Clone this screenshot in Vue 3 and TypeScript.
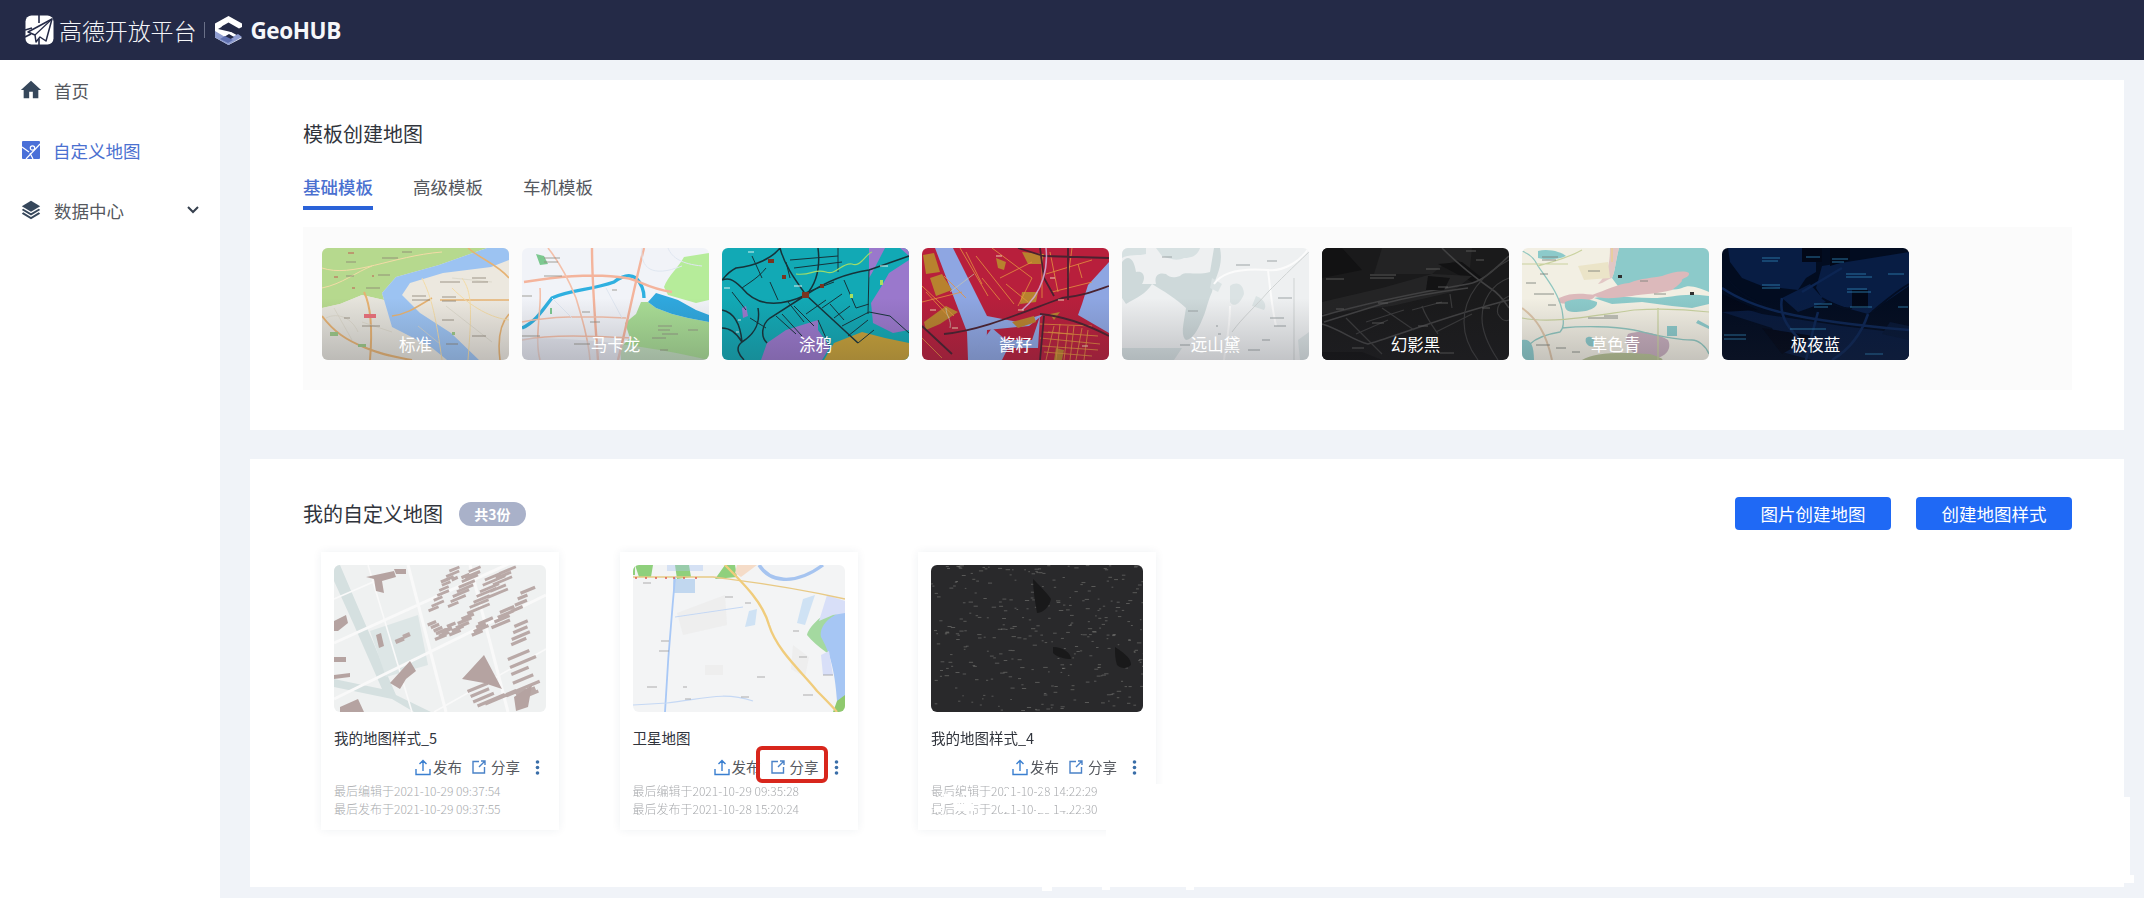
<script setup lang="ts">
type Shape = { d: string; f?: string; s?: string; w?: number; o?: number }
const F = (f: string, d: string, o?: number): Shape => ({ d, f, o })
const S = (s: string, w: number, d: string, o?: number): Shape => ({ d, s, w, o })
// tiny place-name dashes: each entry is x, y, length
const dashes = (c: string, list: number[][], w = 1.4, o = 1): Shape =>
  S(c, w, list.map(([x, y, l]) => `M${x} ${y}h${l}`).join(''), o)

function rng(seed: number) {
  let v = seed
  return () => {
    v = (v * 16807) % 2147483647
    return v / 2147483647
  }
}

function strips(seed: number, cols: number[][], color: string): Shape {
  // rows of slanted building blocks
  const r = rng(seed)
  let d = ''
  for (const [x0, y0, n, dx, dy, len, thick] of cols) {
    for (let i = 0; i < n; i++) {
      const x = x0 + dx * i + r() * 1.5
      const y = y0 + dy * i + r() * 1.5
      const l = len * (0.65 + r() * 0.45)
      d += `M${x} ${y}l${l} ${-l * 0.42}l${thick * 0.42} ${thick}l${-l} ${l * 0.42}z`
    }
  }
  return F(color, d)
}

const thumbs: { name: string; bg: string; shapes: Shape[] }[] = [
  {
    name: '标准', bg: '#ece8df',
    shapes: [
      F('#b6d98e', 'M0 0H165L117 17 74 29 60 45 62 52 40 47 18 56 0 60Z'),
      F('#e6e4dc', 'M0 60 18 56 40 47 62 52 70 79 109 99 125 112H0Z'),
      F('#9cc3f2', 'M187 0H165L117 17 74 29 60 45 70 79 109 99 125 112H157L129 85 98 65 80 47 88 35 121 25 169 19 187 12Z'),
      S('#e6b272', 2, 'M0 68C12 84 24 92 44 100S70 108 90 112M42 44C50 60 50 88 48 112'),
      S('#e6b272', 1.6, 'M146 0C160 12 175 16 187 30M187 66C176 78 176 96 178 112M118 52H187M70 68C86 66 96 58 110 50'),
      S('#f3dba6', 1, 'M0 20C30 30 70 8 120 4M100 30C110 50 114 70 120 112M130 40C150 60 170 70 187 72M140 30C150 44 150 60 146 112M0 40C20 36 34 24 50 18'),
      S('#d9d5c8', .8, 'M4 70C16 64 30 70 36 84M12 60 30 92M70 84 40 74M124 58 170 94M130 30 170 34M96 78 118 96'),
      F('#e8707a', 'M42 66h12v4h-12z'),
      F('#9bc887', 'M8 84h8v4h-8zM36 96h8v3h-8zM130 84h3v3h-3z'),
      dashes('#8a7f70', [[90, 52, 18], [120, 53, 14], [118, 34, 20], [150, 34, 16], [40, 78, 18], [120, 72, 12], [150, 88, 14], [124, 96, 12], [24, 14, 10], [60, 10, 16], [56, 27, 12], [44, 40, 14], [90, 48, 14], [120, 49, 14], [150, 30, 14], [22, 70, 6], [80, 4, 10], [24, 28, 8]], 1, .8),
      dashes('#c05a50', [[26, 5, 6], [12, 29, 4], [50, 28, 2], [30, 40, 3]], 1),
    ],
  },
  {
    name: '马卡龙', bg: '#f1f3f8',
    shapes: [
      F('#b6ec9a', 'M187 5 162 9C156 20 146 28 142 39L146 47 174 55 187 52Z'),
      F('#a8dc94', 'M187 74 166 70 150 66 134 60 126 54 119 54 114 66 103 75 108 90 98 100 99 112H187Z'),
      F('#2fa8de', 'M126 54 134 45 150 50 156 52 174 62 187 67V74L166 70 150 66 134 60Z'),
      S('#2fb0e0', 3.4, 'M0 80C14 74 22 60 30 50 46 42 70 42 92 34 100 28 108 26 114 30 120 36 122 44 122 50'),
      S('#f4b49c', 2.4, 'M70 0C70 20 72 60 76 112M2 34C28 30 70 24 104 30 118 32 124 40 150 44M96 112C104 80 112 40 122 0'),
      S('#f4c0aa', 1.6, 'M26 0C42 20 50 40 54 50 60 70 66 90 68 112M0 74C30 68 60 68 104 70M0 92C30 86 70 88 110 90M18 40C20 60 12 90 18 112'),
      S('#dfe6f0', 1, 'M120 0C118 20 130 30 160 18M146 0C150 10 160 16 180 18M30 50 50 70M84 40 100 70'),
      F('#7cc890', 'M14 6l8 2 4 8-8 1zM28 60h2v6h-2z'),
      F('#d9dce6', 'M0 90C40 90 100 92 187 112H0Z', .5),
      dashes('#8e8a80', [[22, 10, 16], [22, 14, 14], [22, 28, 18], [60, 64, 8], [68, 74, 10], [136, 78, 14], [136, 82, 12], [130, 90, 14], [52, 96, 16], [0, 48, 10], [0, 88, 18], [90, 42, 5], [140, 86, 16], [166, 82, 10], [138, 102, 8]], 1, .8),
    ],
  },
  {
    name: '涂鸦', bg: '#12a9b5',
    shapes: [
      F('#9a78cc', 'M187 12 167 25 159 39 149 55 151 75 171 85 187 82Z'),
      F('#9a78cc', 'M147 0H163L150 25 147 30ZM178 0H187V8Z'),
      F('#9a78cc', 'M39 112 45 95 64 82 96 72 96 82 108 99 100 112ZM20 60l4-2 2 10-5 2z'),
      F('#c8a238', 'M102 112 112 95 140 84 163 90 187 95V112Z'),
      S('#16333a', 1.5, 'M58 0C50 10 34 18 14 20 6 24 2 30 0 32M58 0C62 16 72 30 84 47L136 95M96 0C98 16 96 34 84 47M84 47C100 36 120 26 147 22L187 8M84 47C60 58 36 60 20 40 10 30 6 30 0 32M36 60C38 72 36 84 20 94 12 100 18 108 22 112M0 62C10 64 18 72 20 94M0 80C8 80 14 84 20 94M84 47 48 70C40 76 38 88 45 95'),
      S('#16333a', 1, 'M20 40C28 34 36 30 44 20M64 14 68 30M68 12 116 8M116 0V24M48 34 56 52M72 58 92 78M60 66 80 88M80 46 112 34M100 60 120 46M112 70 128 58M120 78 147 64 168 68 187 85M122 32 134 60M147 22 146 66M96 72 108 99M152 82 136 95M54 68 74 86M66 54 82 74M84 66 104 52M72 20 120 14M30 8 40 30M10 44 24 62M28 70 44 80M108 56 122 72M134 60 147 56M126 88 146 72'),
      S('#9fdc6a', 1.2, 'M74 26C90 28 92 20 104 24 114 28 120 14 130 16 138 20 144 6 150 4'),
      F('#7a3420', 'M46 11h6v4h-6zM80 44h7v6h-7zM60 27h4v4h-4zM98 36h4v4h-4z'),
      dashes('#d8f2f0', [[26, 4, 6], [158, 18, 8], [72, 38, 8], [2, 40, 6], [16, 72, 3], [14, 84, 3]], 1.2),
      F('#a8e060', 'M158 32h3v5h-3zM128 46h3v4h-3z'),
    ],
  },
  {
    name: '酱籽', bg: '#b81f3c',
    shapes: [
      F('#8ea6e2', 'M13 0H31L65 68 96 74 122 66 107 78 65 82 64 112H46L45 84Z'),
      F('#8ea6e2', 'M187 14V85L156 67 160 56 166 37Z'),
      F('#8ea6e2', 'M46 112H80L86 100 116 100 118 68 110 92 84 92 70 80Z'),
      F('#b8822e', 'M1 7 12 5 18 24 4 26ZM8 30 20 26 30 42 14 48ZM2 74 24 58 36 64 18 76 4 82ZM74 10 84 14 82 22 76 20ZM100 4 122 6 120 16 106 16ZM100 44 116 44 114 54 98 56ZM90 74 112 68 114 74 96 80ZM128 66 138 64 132 72ZM134 100 142 102 140 112 132 112Z'),
      S('#e5943f', .8, 'M38 0 66 48M54 8 92 56M70 0 110 30M110 30 96 58M0 38 32 68M0 54 40 44M78 30 110 14M120 6 120 50M124 26 170 12M130 44 170 34M150 0 146 30M0 90 20 110M118 76 170 78M132 78 124 112M146 78 142 112M160 80 154 112M118 90 178 96M122 104 170 108M126 84 150 86M138 76 134 112M152 78 148 112M166 82 162 112M120 84 176 88M120 98 176 102M44 4 60 36M60 30 78 52M84 36 106 54M128 4 136 44M156 16 160 30M22 28 44 50M4 44 28 70'),
      S('#4a2230', 1.8, 'M0 78 30 106M22 86C60 82 96 66 140 50 160 48 170 44 187 38M146 0V52M118 0 122 30 132 48M118 66C140 68 160 74 187 88M122 68 118 112M96 0 122 8 187 10'),
      S('#d0a8d0', 1.5, 'M124 0C126 18 122 44 100 62', .9),
      S('#c8c8b0', 1, 'M52 26 28 44M24 60C24 68 30 72 28 80', .7),
      dashes('#f0d0b0', [[74, 8, 6], [128, 30, 5], [136, 52, 6], [96, 62, 6], [160, 98, 6], [8, 62, 6], [30, 80, 6]], 1.2),
    ],
  },
  {
    name: '远山黛', bg: '#eef0f1',
    shapes: [
      F('#ced9da', 'M0 14C6 6 12 10 14 24 22 22 24 30 20 36H34C32 28 36 24 44 26 48 30 52 30 58 28 62 22 74 28 88 24L92 0H98C102 20 92 30 90 44 86 52 84 64 80 72 76 82 70 92 64 92 58 88 62 74 64 60 56 52 40 42 30 36 24 46 14 50 4 56L0 50Z'),
      F('#d7e1e2', 'M0 0H24V6C18 8 6 6 0 10ZM34 0H78C76 6 72 10 62 10 54 14 46 10 40 8ZM0 100H60L52 112H0Z'),
      F('#dbe3e4', 'M108 38C116 32 122 38 122 46 118 56 112 60 108 54ZM90 30 100 36 96 44 88 40ZM134 48C140 50 146 56 142 62L130 58ZM176 92 187 84V112H178Z'),
      S('#fbfbfb', 2, 'M92 36C100 24 120 20 146 22 160 24 178 14 187 0M108 58C108 80 104 96 102 112M146 22C148 40 150 60 154 78'),
      S('#cfd3d3', 1, 'M110 84C120 70 134 58 146 44 158 32 170 20 187 4M172 30V112'),
      dashes('#9da4a6', [[40, 9, 10], [114, 17, 14], [145, 13, 10], [66, 63, 10], [156, 50, 14], [148, 70, 14], [152, 78, 12], [58, 97, 10], [126, 102, 12], [140, 92, 8], [94, 78, 2], [96, 86, 3]], 1),
    ],
  },
  {
    name: '幻影黑', bg: '#1a1a1b',
    shapes: [
      F('#232324', 'M52 26 60 0H150L148 20 136 12 120 18 110 26Z'),
      F('#121213', 'M116 16 140 14 160 30 150 34ZM0 0H20L40 22 0 30Z'),
      F('#262627', 'M0 54 60 40 110 26 150 28 130 44 70 58 0 66Z', .9),
      S('#414142', 1.6, 'M0 68C40 56 100 44 146 36 160 34 172 22 187 8M2 74 60 56C90 48 130 42 146 40M120 0C130 10 148 26 168 40 178 46 183 54 187 60M0 76C20 82 30 92 46 96 80 86 130 66 187 52'),
      S('#3a3a3b', 1.2, 'M187 12C160 26 142 48 142 74 142 90 150 104 156 112M187 30C170 36 160 52 160 70 160 84 168 100 176 112M187 48C178 52 174 60 176 66 178 70 182 74 187 72M100 58C104 70 112 80 116 86M24 70 60 106M60 60 92 82M44 74 82 62M34 86 66 72M90 62 120 54M114 84 150 66M128 46 130 60'),
      F('#131314', 'M106 28 128 30 122 42 104 42ZM0 112V104H40L60 112Z'),
      dashes('#5e5e5e', [[48, 27, 26], [48, 30, 24], [4, 31, 18], [104, 21, 14], [144, 3, 10], [154, 12, 8], [50, 75, 12], [114, 55, 12], [14, 61, 8], [56, 55, 10], [96, 78, 10], [160, 60, 8], [30, 100, 12], [118, 105, 14], [116, 39, 10]], 1, .9),
    ],
  },
  {
    name: '草色青', bg: '#f2efe3',
    shapes: [
      F('#8ccaca', 'M97 0H187V44C176 40 168 36 160 40 150 44 130 38 112 44 100 46 96 38 90 30 93 24 93 16 97 0Z'),
      F('#8ccaca', 'M72 50C90 46 110 50 130 50 150 50 160 44 187 48V56L170 60 150 58 120 54 90 56Z'),
      F('#dcb9bb', 'M70 47C84 42 96 36 107 35 120 30 130 30 140 28 150 24 162 22 167 25 168 30 158 30 160 33 156 38 152 40 150 42 136 46 120 46 110 48 94 50 80 52 70 47ZM37 50C50 44 62 46 73 47 74 52 60 54 50 56 42 56 34 56 37 50Z'),
      F('#dcb9bb', 'M88 0H97C93 16 93 24 90 30 84 32 80 36 76 36 86 26 88 14 88 0Z', .75),
      F('#8ccaca', 'M43 54C52 50 66 50 75 54 76 60 66 64 52 64 44 64 42 60 43 54ZM0 92C8 90 12 96 12 112H0ZM64 90C70 86 74 92 72 98 68 100 62 96 64 90ZM145 78h10v10h-10zM176 72l11 6v3l-13-6z'),
      F('#c7aebc', 'M106 86C118 82 132 84 146 92 150 100 146 112 120 112 110 102 100 98 106 86Z'),
      F('#b7c294', 'M60 112C72 104 100 104 128 106 146 112 140 112 138 112Z'),
      F('#ebe4c8', 'M56 18 86 14 88 30 62 32Z'),
      S('#8fc6bf', 1.3, 'M0 3C8 6 12 10 16 18 24 30 36 44 40 62 42 74 42 80 38 84 26 86 14 90 8 96M40 80C60 78 90 78 112 82 130 86 150 92 170 92 176 92 184 98 187 106'),
      S('#c9d29f', 1.2, 'M0 70C30 76 70 68 112 62 140 60 170 62 187 64M16 18C30 14 46 10 60 2M136 60V112M0 16H46'),
      S('#dcc4a8', 2, 'M0 60C14 70 24 84 30 112'),
      S('#e8cf96', 1.6, 'M90 0V14'),
      F('#8ccaca', 'M16 3C26 0 40 4 44 8 36 12 24 12 16 10Z'),
      dashes('#7b7f78', [[20, 9, 16], [20, 12, 14], [66, 23, 12], [18, 26, 8], [4, 35, 10], [12, 46, 20], [26, 57, 8], [66, 70, 30], [82, 68, 14], [14, 97, 14], [34, 100, 10], [118, 33, 8], [132, 46, 12], [50, 104, 8]], 1, .85),
      F('#303030', 'M96 27h4v3h-4zM168 44h4v3h-4z'),
    ],
  },
  {
    name: '极夜蓝', bg: '#020c20',
    shapes: [
      F('#081d44', 'M6 0H80V12H94V24L84 30 76 42 40 38 20 30 8 14ZM100 18 187 4V38L146 66 124 60 100 50 94 40ZM88 36 104 54 76 64 60 50Z'),
      F('#07193c', 'M0 54 40 66 120 78 187 86V112H90L60 104 50 80 0 64Z'),
      F('#020818', 'M80 0H100V14H80ZM108 0H128V12L108 18ZM130 42H146V60H130ZM0 46 36 62 0 64ZM40 80 92 88 60 106Z'),
      F('#061634', 'M168 74 187 78V92L160 86Z'),
      S('#0c2552', 2.6, 'M0 40C30 60 70 72 187 82M60 50C56 70 70 84 82 96M80 44 120 20M96 64C92 78 88 94 84 112M146 66C140 84 130 100 110 112'),
      S('#030d22', 2, 'M0 20C6 36 24 50 40 56M100 50C110 56 120 62 130 60M187 36C170 46 160 56 150 64'),
      dashes('#2a7aaa', [[40, 10, 18], [40, 13, 16], [84, 9, 14], [110, 11, 16], [110, 14, 12], [124, 26, 20], [124, 29, 26], [166, 26, 16], [40, 37, 18], [40, 40, 18], [125, 41, 20], [125, 44, 24], [92, 56, 18], [92, 59, 14], [128, 59, 22], [68, 81, 36], [2, 87, 22], [2, 91, 22], [143, 106, 18], [176, 59, 10]], 1, .9),
    ],
  },
]

const dots = (() => {
  const r = rng(77)
  let d = ''
  for (let i = 0; i < 320; i++) {
    d += `M${(r() * 212).toFixed(1)} ${(r() * 147).toFixed(1)}h${(1.5 + r() * 3).toFixed(1)}`
  }
  return d
})()

const cards: { title: string; bg: string; shapes: Shape[]; edited: string; published: string }[] = [
  {
    title: '我的地图样式_5', bg: '#eff1f1',
    edited: '最后编辑于2021-10-29 09:37:54', published: '最后发布于2021-10-29 09:37:55',
    shapes: [
      F('#d5e0e0', 'M0 0H6L30 56 62 130 97 147H80L58 134 0 122V114L48 124 20 60 0 16Z'),
      F('#dde6e6', 'M36 66 84 50 94 100 52 112Z'),
      S('#f9f9f9', 3, 'M0 78 212 -18M0 134 212 30M74 0 112 147M136 0 174 147'),
      S('#f9f9f9', 1.6, 'M34 0 78 147M0 34 60 8M100 147 212 84'),
      strips(3, [[94, 44, 9, 2.5, -5, 13, 2.6], [112, 40, 8, 3, -5, 15, 2.6], [132, 46, 7, 3, -5.500, 22, 2.6], [152, 30, 5, 3, -6, 22, 2.6], [106, 14, 4, 10, -2, 9, 3], [176, 44, 4, 3, -6, 14, 3], [100, 72, 5, 3, -3, 12, 3], [172, 92, 6, 2, 8, 24, 3], [170, 128, 3, 10, -2, 12, 4], [142, 138, 2, 8, -2, 26, 3], [60, 74, 2, 8, -5, 10, 4], [92, 58, 4, 3, 3, 10, 3], [114, 68, 5, 3, -4, 14, 3], [136, 68, 4, 2.500, -4, 14, 3], [156, 60, 4, 3, -5, 20, 3], [176, 78, 4, 1, -6, 20, 3], [132, 124, 3, 3, 5, 22, 3]], '#b9a9a7'),
      F('#b5a3a1', 'M128 114 150 90 168 124 150 118 ZM56 118 76 96 82 106 72 114 66 124ZM42 70l5-2 3 13-5 2zM32 12 60 6 62 12 48 16 50 28 42 26 40 14zM60 4h12v5h-10zM0 56 12 50 14 58 4 66 0 66ZM0 110 16 108 16 112 0 114ZM6 142 24 134 30 147H6ZM180 132 198 120 194 142 182 146ZM0 92H12V97H0Z'),
    ],
  },
  {
    title: '卫星地图', bg: '#f3f4f5',
    edited: '最后编辑于2021-10-29 09:35:28', published: '最后发布于2021-10-28 15:20:24',
    shapes: [
      F('#8fd07c', 'M2 0H20L18 12 6 12ZM42 0H56L58 12 44 14ZM82 14 92 0H102L104 12 ZM0 0H2V10H0Z'),
      F('#f5dcc8', 'M104 0H124L108 12 102 8Z'),
      F('#a8c6f2', 'M34 0H70V6H34Z', .4),
      F('#b4d0ee', 'M40 14H62V28H40Z', .8),
      F('#a4d9a0', 'M212 36C196 44 176 60 174 70 184 82 200 92 212 100Z'),
      F('#a6c6f4', 'M212 46C198 50 186 60 188 72 196 86 202 104 204 136L212 144Z'),
      F('#d8dff8', 'M194 30 212 36V48L200 50 186 56ZM188 90 196 86 200 110 190 110Z'),
      F('#cfe2f4', 'M170 34 182 30 172 60 164 58ZM116 46 124 44 122 60 112 62Z'),
      F('#8fc96e', 'M204 136 212 130V147H200Z'),
      F('#ececec', 'M44 48 92 30 94 60 50 70ZM72 100h18v10h-18zM160 80l16 12-4 20-14-8z', .8),
      S('#a6c4f0', 3.4, 'M126 0C136 16 160 22 190 0'),
      S('#e8c984', 1.3, 'M0 12H80C110 16 150 20 212 34'),
      S('#f0cc7c', 2.4, 'M92 0C112 20 130 38 136 60 144 86 170 108 184 126 194 136 200 142 204 147'),
      S('#a8c8f6', 1.8, 'M42 12C40 40 36 70 32 147'),
      S('#c5d8f4', 1.1, 'M42 52 110 42M0 140 34 138M34 138C70 134 90 126 120 136'),
      dashes('#e05a50', [[2, 13, 2], [12, 13, 2], [22, 13, 2], [32, 13, 2], [40, 13, 2], [50, 13, 2], [62, 13, 2]], 1.4),
      dashes('#9b9b9b', [[10, 18, 8], [28, 76, 8], [26, 86, 10], [92, 32, 8], [112, 38, 6], [124, 112, 8], [108, 132, 8], [166, 92, 8], [190, 110, 10], [14, 122, 10], [50, 122, 4], [52, 134, 6], [170, 130, 10], [160, 66, 6]], 1, .8),
    ],
  },
  {
    title: '我的地图样式_4', bg: '#29292b',
    edited: '最后编辑于2021-10-28 14:22:29', published: '最后发布于2021-10-28 14:22:30',
    shapes: [
      S('#8a8a86', 1, dots, .5),
      F('#19191a', 'M102 14C106 18 118 30 120 34 118 44 110 48 106 48 104 36 102 24 102 14ZM122 82C132 82 140 88 140 94 134 94 126 92 122 88ZM184 82C196 90 200 94 200 100 196 104 190 104 186 100 184 94 184 88 184 82Z'),
    ],
  },
]

// patches where the reference's text and edges were wiped out
const wipes = [
  { left: 928, top: 795, width: 5, height: 7 }, { left: 944, top: 794, width: 7, height: 4 },
  { left: 962, top: 791, width: 8, height: 4 }, { left: 1006, top: 789, width: 4, height: 7 },
  { left: 1042, top: 789, width: 3, height: 6 }, { left: 1106, top: 784, width: 60, height: 60 },
  { left: 920, top: 815, width: 240, height: 3 }, { left: 934, top: 806, width: 7, height: 6 },
  { left: 954, top: 804, width: 20, height: 7 }, { left: 1000, top: 804, width: 10, height: 8 },
  { left: 1036, top: 804, width: 14, height: 9 }, { left: 1060, top: 804, width: 12, height: 7 },
  { left: 920, top: 826, width: 235, height: 3 }, { left: 2124, top: 797, width: 6, height: 86 },
  { left: 1042, top: 887, width: 10, height: 4 }, { left: 1102, top: 887, width: 8, height: 3 },
  { left: 1186, top: 887, width: 8, height: 3 }, { left: 2096, top: 875, width: 38, height: 8 },
]
const wipeStyle = (w: { left: number; top: number; width: number; height: number }) => ({
  left: `${w.left}px`, top: `${w.top}px`, width: `${w.width}px`, height: `${w.height}px`,
})
</script>

<template>
  <div class="page">
    <header class="topbar">
      <svg class="amap" width="29" height="30" viewBox="0 0 29 30">
        <rect x="0.5" y="0.5" width="28" height="29" rx="6" fill="#fff" />
        <path d="M14 0v8M14 24v6M0 15l7-2M0 22l6-3" stroke="#242a47" stroke-width="1.600" fill="none" />
        <path d="M27 4 3 17l7 3 1 7 4-5 6 4z" fill="#fff" stroke="#242a47" stroke-width="1.500" stroke-linejoin="round" />
        <path d="M27 4 10 20" stroke="#242a47" stroke-width="1.100" />
      </svg>
      <span class="brand">高德开放平台</span>
      <i class="brand-sep"></i>
      <svg class="geo" width="29" height="31" viewBox="0 0 29 31">
        <path d="M14.500 1 28 8.500V12l-3 1.500-10.500-6-7 4 7 4 13.500 7.500L14.500 30 1 22.500V8.500Z" fill="#fff" />
        <path d="M1 16 14.500 24 24 19l4 3-13.500 8L1 22.500Z" fill="#8f9dd0" />
        <path d="M10 22l5-3 5 3-5 3zM4 14l7-4 9 5-3 2z" fill="#242a47" />
        <path d="M6 24l8 4 5-3-8-4z" fill="#5f70b0" />
      </svg>
      <span class="geohub">GeoHUB</span>
    </header>

    <div class="body">
      <aside class="sidebar">
        <a class="menu-item">
          <svg width="22" height="22" viewBox="0 0 24 24"><path d="M10 21v-7h4v7h6v-9h3L12 2 1 12h3v9z" fill="#36475b" /></svg>
          <span>首页</span>
        </a>
        <a class="menu-item active">
          <svg width="18" height="18" viewBox="0 0 18 18">
            <rect width="18" height="18" rx="1" fill="#4a70d8" />
            <path d="M0 6l7 5M4 18 18 3M11 18l-3-6" stroke="#fff" stroke-width="1.200" fill="none" />
            <circle cx="10.500" cy="7" r="2.200" fill="none" stroke="#fff" stroke-width="1.200" />
          </svg>
          <span>自定义地图</span>
        </a>
        <a class="menu-item">
          <svg width="22" height="22" viewBox="0 0 24 24">
            <path d="M12 2 2 8l10 6 10-6z" fill="#36475b" />
            <path d="M3.500 10.500 2 12l10 6 10-6-1.500-1.500L12 15.500z" fill="#36475b" />
            <path d="M3.500 14.500 2 16l10 6 10-6-1.500-1.500L12 19.500z" fill="#36475b" />
          </svg>
          <span>数据中心</span>
          <svg class="chev" width="14" height="10" viewBox="0 0 14 10"><path d="M2 2l5 5 5-5" fill="none" stroke="#36404e" stroke-width="2" /></svg>
        </a>
      </aside>

      <main class="main">
        <section class="panel panel-templates">
          <h2 class="title">模板创建地图</h2>
          <nav class="tabs">
            <span class="tab on">基础模板</span>
            <span class="tab">高级模板</span>
            <span class="tab">车机模板</span>
          </nav>
          <div class="gallery">
            <div v-for="t in thumbs" :key="t.name" class="thumb">
              <svg width="187" height="112" viewBox="0 0 187 112" :style="{ background: t.bg }">
                <g class="soft">
                  <path v-for="(s, i) in t.shapes" :key="i" :d="s.d" :fill="s.f || 'none'" :stroke="s.s || 'none'" :stroke-width="s.w || 0" :opacity="s.o ?? 1" />
                </g>
              </svg>
              <span class="thumb-name">{{ t.name }}</span>
            </div>
          </div>
        </section>

        <section class="panel panel-mine">
          <div class="mine-head">
            <h2 class="title">我的自定义地图</h2>
            <span class="badge">共3份</span>
            <button class="btn first">图片创建地图</button>
            <button class="btn">创建地图样式</button>
          </div>
          <div class="cards">
            <article v-for="c in cards" :key="c.title" class="card">
              <svg class="card-img" width="212" height="147" viewBox="0 0 212 147" :style="{ background: c.bg }">
                <g class="soft">
                  <path v-for="(s, i) in c.shapes" :key="i" :d="s.d" :fill="s.f || 'none'" :stroke="s.s || 'none'" :stroke-width="s.w || 0" :opacity="s.o ?? 1" />
                </g>
              </svg>
              <h3 class="card-title">{{ c.title }}</h3>
              <div class="actions">
                <svg width="16" height="17" viewBox="0 0 16 17"><path d="M8 12V2M4.500 5 8 1.500 11.500 5M1 10v5.500h14V10" fill="none" stroke="#3a7fd0" stroke-width="1.400" /></svg>
                <span class="act first-act">发布</span>
                <svg class="share-ic" width="14" height="14" viewBox="0 0 14 14"><path d="M7 1.500H1v11.500h11.500V7M7 7l6-6M9 1h4v4" fill="none" stroke="#4a82c8" stroke-width="1.400" /></svg>
                <span class="act">分享</span>
                <svg class="more" width="5" height="15" viewBox="0 0 5 15"><circle cx="2.500" cy="2" r="1.800" fill="#3a6ea8" /><circle cx="2.500" cy="7.500" r="1.800" fill="#3a6ea8" /><circle cx="2.500" cy="13" r="1.800" fill="#3a6ea8" /></svg>
              </div>
              <p class="meta">{{ c.edited }}</p>
              <p class="meta">{{ c.published }}</p>
            </article>
          </div>
        </section>
      </main>
    </div>

    <i class="mark"></i>
    <i v-for="(w, i) in wipes" :key="i" class="wipe" :style="wipeStyle(w)"></i>
  </div>
</template>

<style>
html, body { margin: 0; background: #f0f3f8; }
</style>

<style scoped>
.page {
  position: relative;
  width: 2144px;
  height: 898px;
  overflow: hidden;
  background: #f0f3f8;
  font-family: "Noto Sans CJK SC", "Noto Sans", sans-serif;
}
.topbar {
  height: 60px;
  background: #242a47;
  display: flex;
  align-items: center;
  padding-left: 25px;
}
.brand {
  margin-left: 5px;
  color: #f4f5f8;
  font-size: 23px;
  font-weight: 300;
  letter-spacing: -0.1px;
}
.brand-sep { width: 1px; height: 16px; background: #6a7088; margin: 0 9px 0 8px; }
.geo { margin-top: 1px; }
.geohub {
  margin-left: 7px;
  color: #f6f7fa;
  font-family: "Open Sans", sans-serif;
  font-size: 22.500px;
  font-weight: 700;
  letter-spacing: -0.4px;
}
.body { display: flex; height: 838px; }
.sidebar { width: 220px; background: #fff; flex: none; }
.menu-item {
  height: 60px;
  display: flex;
  align-items: center;
  padding-left: 20px;
  font-size: 17.500px;
  color: #55585e;
  position: relative;
}
.menu-item span { margin-left: 12px; }
.active { color: #4a70d0; }
.active svg { margin-left: 2px; margin-right: 1px; }
.chev { position: absolute; right: 20px; top: 25px; }
.main {
  flex: 1;
  padding: 20px 20px 0 30px;
  display: flex;
  flex-direction: column;
  gap: 29px;
}
.panel { background: #fff; padding: 0 52px 0 53px; }
.panel-templates { height: 350px; padding-top: 40px; box-sizing: border-box; }
.panel-mine { height: 428px; padding-top: 38px; box-sizing: border-box; }
.title { margin: 0; font-size: 20px; font-weight: 400; color: #30343c; line-height: 28px; }
.tabs { display: flex; gap: 40px; margin-top: 20px; height: 42px; }
.tab { font-size: 17.500px; line-height: 38px; height: 42px; color: #55585e; box-sizing: border-box; }
.tab.on { color: #4a70d0; font-weight: 500; border-bottom: 4px solid #2a62d8; }
.gallery {
  margin-top: 17px;
  height: 163px;
  box-sizing: border-box;
  background: #fbfbfb;
  padding: 21px 19px;
  display: flex;
  gap: 13px;
}
.thumb {
  position: relative;
  width: 187px;
  height: 112px;
  border-radius: 6px;
  overflow: hidden;
  flex: none;
}
.thumb svg { display: block; }
.thumb::after {
  content: "";
  position: absolute;
  inset: 45% 0 0 0;
  background: linear-gradient(to bottom, rgba(40, 40, 50, 0), rgba(40, 40, 50, 0.22));
}
.soft { filter: blur(0.5px); }
.thumb-name {
  position: absolute;
  left: 0;
  right: 0;
  bottom: 3px;
  text-align: center;
  color: #fff;
  font-size: 16.500px;
  line-height: 26px;
  z-index: 1;
}
.mine-head { display: flex; align-items: center; height: 33px; }
.badge {
  margin-left: 16px;
  width: 67px;
  height: 24px;
  border-radius: 12px;
  background: #a9b1c9;
  color: #fff;
  font-size: 14px;
  font-weight: 700;
  line-height: 24px;
  text-align: center;
}
.btn {
  width: 156px;
  height: 33px;
  margin-left: 25px;
  padding: 0;
  border: 0;
  border-radius: 4px;
  background: #1f69f5;
  color: #fff;
  font-family: inherit;
  font-size: 17.500px;
  line-height: 33px;
}
.btn.first { margin-left: auto; }
.cards { display: flex; gap: 60.500px; margin: 22px 0 0 18px; }
.card {
  width: 238px;
  height: 278px;
  box-sizing: border-box;
  padding: 13px;
  background: #fff;
  box-shadow: 0 0 9px rgba(30, 50, 90, 0.07);
  flex: none;
}
.card-img { display: block; border-radius: 6px; }
.card-title {
  margin: 16px 0 0;
  font-size: 14.500px;
  line-height: 20px;
  font-weight: 400;
  color: #30343c;
}
.actions {
  display: flex;
  align-items: center;
  justify-content: flex-end;
  height: 24px;
  margin-top: 7px;
  padding-right: 6px;
}
.act { font-size: 14.500px; color: #55585e; line-height: 24px; }
.first-act { margin-left: 2px; }
.share-ic { margin: 0 5px 0 10px; }
.more { margin-left: 15px; }
.meta {
  margin: 0;
  font-size: 12px;
  line-height: 17.500px;
  font-weight: 300;
  color: #a9abae;
  white-space: nowrap;
}
.actions + .meta { margin-top: 3px; }
.mark {
  position: absolute;
  left: 756px;
  top: 746px;
  width: 72px;
  height: 37px;
  box-sizing: border-box;
  border: 4px solid #d8261c;
  border-radius: 6px;
}
.wipe { position: absolute; background: #fff; }
</style>
